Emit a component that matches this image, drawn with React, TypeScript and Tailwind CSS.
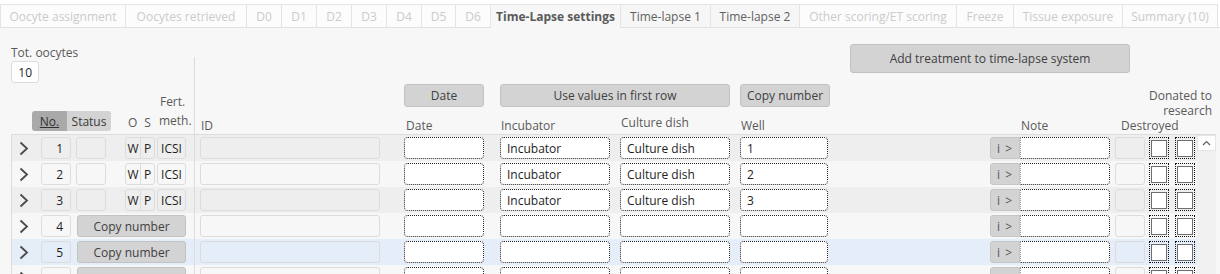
import React from 'react';

const TABS = [
  { label: 'Oocyte assignment', w: 'w-[125px]', state: 'off' },
  { label: 'Oocytes retrieved', w: 'w-[121px]', state: 'off' },
  { label: 'D0', w: 'w-[35px]', state: 'off' },
  { label: 'D1', w: 'w-[35px]', state: 'off' },
  { label: 'D2', w: 'w-[35px]', state: 'off' },
  { label: 'D3', w: 'w-[35px]', state: 'off' },
  { label: 'D4', w: 'w-[35px]', state: 'off' },
  { label: 'D5', w: 'w-[34px]', state: 'off' },
  { label: 'D6', w: 'w-[35px]', state: 'off' },
  { label: 'Time-Lapse settings', w: 'w-[130px]', state: 'active' },
  { label: 'Time-lapse 1', w: 'w-[90px]', state: 'on' },
  { label: 'Time-lapse 2', w: 'w-[89px]', state: 'on' },
  { label: 'Other scoring/ET scoring', w: 'w-[157px]', state: 'off' },
  { label: 'Freeze', w: 'w-[57px]', state: 'off' },
  { label: 'Tissue exposure', w: 'w-[109px]', state: 'off' },
  { label: 'Summary (10)', w: 'w-[96px]', state: 'off' },
];

// last row is only partly in view, so its texts are left out
const ROWS = [
  { no: 1, filled: true, bg: 'bg-[#eeeeee]', peek: false },
  { no: 2, filled: true, bg: 'bg-[#f7f7f7]', peek: false },
  { no: 3, filled: true, bg: 'bg-[#eeeeee]', peek: false },
  { no: 4, filled: false, bg: 'bg-[#f7f7f7]', peek: false },
  { no: 5, filled: false, bg: 'bg-[#e5edf8]', peek: false },
  { no: 6, filled: false, bg: 'bg-[#f7f7f7]', peek: true },
];

function Chevron() {
  return (
    <svg width="10" height="15" viewBox="0 0 10 15" className="ml-[7px]">
      <polyline points="1.5,1.5 8,7.5 1.5,13.5" fill="none" stroke="#4a4a4a" strokeWidth="1.8" />
    </svg>
  );
}

function Field({ w, text }: { w: string; text?: string }) {
  return (
    <div className={`${w} h-[22px] flex items-center pl-[6px] bg-white border border-dotted border-[#222] rounded-[4px] text-[#1e1e1e]`}>
      {text}
    </div>
  );
}

function Checkbox() {
  return (
    <div className="w-[20px] h-[22px] border border-dotted border-[#111] flex items-center justify-center">
      <div className="w-[16px] h-[17px] bg-white border border-[#6e6e6e]" />
    </div>
  );
}

function Row({ no, filled, bg, peek }: { no: number; filled: boolean; bg: string; peek: boolean }) {
  return (
    <div className={`flex items-center h-[26px] shrink-0 ${bg}`}>
      <div className="w-[29px] flex items-center">
        <Chevron />
      </div>
      <div className="w-[30px] h-[22px] border border-[#dcdcdc] rounded-[3px] flex items-center justify-end pr-[7px] text-[#1e1e1e]">
        {peek ? '' : no}
      </div>
      {filled ? (
        <>
          <div className="ml-[5px] w-[30px] h-[22px] border border-[#dcdcdc] rounded-[3px]" />
          <div className="ml-[19px] w-[30px] h-[22px] border border-[#dcdcdc] rounded-[3px] flex text-[#1e1e1e]">
            <div className="w-[15px] flex items-center justify-center border-r border-[#dcdcdc]">W</div>
            <div className="flex-1 flex items-center justify-center">P</div>
          </div>
          <div className="ml-[2px] w-[29px] h-[22px] border border-[#dcdcdc] rounded-[3px] flex items-center justify-center text-[#1e1e1e]">
            ICSI
          </div>
        </>
      ) : (
        <div className="ml-[6px] w-[109px] h-[22px] bg-[#d3d3d3] border border-[#c2c2c2] rounded-[3px] flex items-center justify-center text-[#404040]">
          {peek ? '' : 'Copy number'}
        </div>
      )}
      <div className="ml-[8px] w-px h-[26px] bg-[#dcdcdc]" />
      <div className="ml-[5px] w-[180px] h-[22px] border border-[#dcdcdc] rounded-[3px]" />
      <div className="ml-[24px]">
        <Field w="w-[80px]" />
      </div>
      <div className="ml-[16px]">
        <Field w="w-[110px]" text={no <= 3 ? 'Incubator' : ''} />
      </div>
      <div className="ml-[10px]">
        <Field w="w-[110px]" text={no <= 3 ? 'Culture dish' : ''} />
      </div>
      <div className="ml-[10px]">
        <Field w="w-[88px]" text={no <= 3 ? String(no) : ''} />
      </div>
      <div className="ml-[162px] w-[30px] h-[22px] bg-[#d3d3d3] border border-[#c6c6c6] rounded-l-[3px] flex items-center justify-center text-[#555] tracking-[1px]">
        {peek ? '' : 'i >'}
      </div>
      <div className="w-[90px] h-[22px] bg-white border border-dotted border-[#222] border-l-[#9a9a9a] rounded-r-[4px]" />
      <div className="ml-[5px] w-[30px] h-[22px] border border-[#dcdcdc] rounded-[3px]" />
      <div className="ml-[4px]">
        <Checkbox />
      </div>
      <div className="ml-[6px]">
        <Checkbox />
      </div>
    </div>
  );
}

export default function App() {
  return (
    <div
      className="w-[1220px] h-[274px] overflow-hidden bg-[#f7f7f7] text-[12px] leading-[15px] text-[#5a5a5a] flex flex-col"
      style={{ fontFamily: '"Open Sans", "Noto Sans", sans-serif' }}
    >
      {/* Tabs */}
      <div className="h-[28px] shrink-0 bg-white pt-[4px] flex border-b border-[#e2e2e2]">
        {TABS.map((t, i) => (
          <div
            key={t.label}
            className={`${t.w} shrink-0 flex items-center justify-center whitespace-nowrap border-t border-l border-[#e4e4e4] ${
              i === TABS.length - 1 ? 'border-r' : ''
            } ${
              t.state === 'active'
                ? 'bg-[#f7f7f7] font-bold text-[#5a5a5a] -mb-px border-[#dedede]'
                : t.state === 'on'
                ? 'bg-[#f6f6f6] text-[#5f5f5f]'
                : 'bg-[#fcfcfc] text-[#cbcbcb]'
            }`}
          >
            {t.label}
          </div>
        ))}
      </div>

      {/* Header */}
      <div className="h-[106px] shrink-0 flex">
        <div className="w-[194px] flex flex-col">
          <div className="mt-[17px] ml-[11px]">Tot. oocytes</div>
          <div className="mt-[1px] ml-[11px] w-[28px] h-[22px] bg-white border border-[#dcdcdc] rounded-[3px] flex items-center justify-end pr-[6px] text-[#1e1e1e]">
            10
          </div>
          <div className="mt-auto mb-[3px] flex items-end">
            <div className="ml-[32px] flex h-[20px] rounded-[3px] overflow-hidden">
              <div className="w-[35px] bg-[#a9a9a9] flex items-center justify-center text-[#303030] underline">No.</div>
              <div className="w-[44px] bg-[#d3d3d3] flex items-center justify-center text-[#3a3a3a]">Status</div>
            </div>
            <div className="ml-[17px] mb-[1px]">O</div>
            <div className="ml-[7px] mb-[1px]">S</div>
            <div className="ml-[8px] mb-[1px] leading-[19px]">
              <div className="pl-[1px]">Fert.</div>
              <div>meth.</div>
            </div>
          </div>
        </div>
        <div className="w-px mt-[29px] bg-[#dcdcdc]" />
        <div className="flex-1 flex flex-col">
          <div className="mt-[16px] ml-[655px] w-[280px] h-[29px] bg-[#d3d3d3] border border-[#c2c2c2] rounded-[3px] flex items-center justify-center text-[#404040]">
            Add treatment to time-lapse system
          </div>
          <div className="mt-[11px] h-[23px] flex">
            <div className="ml-[209px] w-[80px] bg-[#d3d3d3] border border-[#c2c2c2] rounded-[3px] flex items-center justify-center text-[#404040]">
              Date
            </div>
            <div className="ml-[16px] w-[230px] bg-[#d3d3d3] border border-[#c2c2c2] rounded-[3px] flex items-center justify-center text-[#404040]">
              Use values in first row
            </div>
            <div className="ml-[10px] w-[90px] bg-[#d3d3d3] border border-[#c2c2c2] rounded-[3px] flex items-center justify-center text-[#404040]">
              Copy number
            </div>
          </div>
          <div className="h-[27px] flex items-end pb-[1px]">
            <div className="w-[209px] pl-[6px]">ID</div>
            <div className="w-[96px] pl-[2px]">Date</div>
            <div className="w-[120px] pl-[1px]">Incubator</div>
            <div className="w-[120px] pl-[1px] mb-[3px]">Culture dish</div>
            <div className="w-[280px] pl-[1px]">Well</div>
            <div className="w-[100px] pl-[1px]">Note</div>
            <div className="w-[92px] pl-[1px] flex flex-col">
              <div className="text-right whitespace-nowrap">Donated to</div>
              <div className="text-right">research</div>
              <div>Destroyed</div>
            </div>
          </div>
        </div>
      </div>

      {/* Table */}
      <div className="flex-1 ml-[11px] mr-[4px] border-t border-l border-[#dcdcdc] flex overflow-hidden">
        <div className="w-[1185px] flex flex-col">
          {ROWS.map((r) => (
            <Row key={r.no} {...r} />
          ))}
        </div>
        <div className="w-[19px] bg-[#f0f0f0] flex flex-col">
          <div className="h-[16px] bg-white border border-[#e6e6e6] flex items-center justify-center">
            <svg width="9" height="6" viewBox="0 0 9 6">
              <polyline points="1,5 4.5,1.5 8,5" fill="none" stroke="#606060" strokeWidth="1.2" />
            </svg>
          </div>
        </div>
      </div>
    </div>
  );
}
